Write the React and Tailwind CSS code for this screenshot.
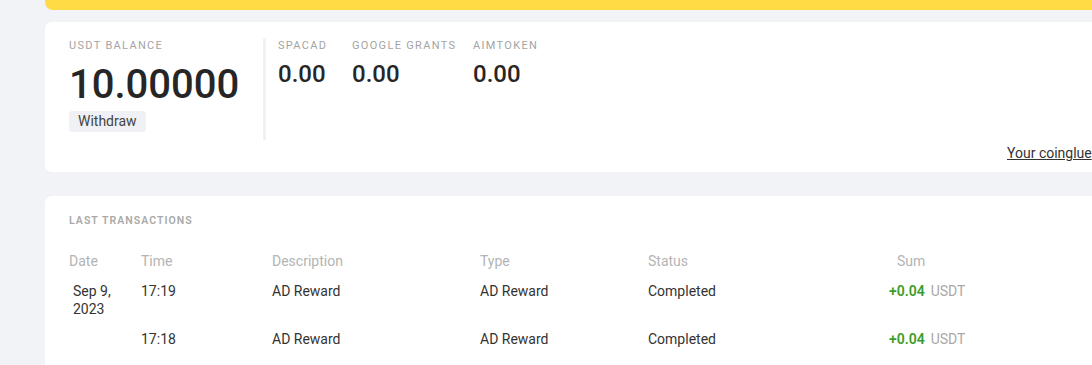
import React from 'react'

const tokens = [
  { name: 'SPACAD', value: '0.00', width: 'w-[74px]' },
  { name: 'GOOGLE GRANTS', value: '0.00', width: 'w-[121px]' },
  { name: 'AIMTOKEN', value: '0.00', width: 'w-[100px]' },
]

const rows = [
  { date: ['Sep 9,', '2023'], time: '17:19', desc: 'AD Reward', type: 'AD Reward', status: 'Completed', sum: '+0.04' },
  { date: [], time: '17:18', desc: 'AD Reward', type: 'AD Reward', status: 'Completed', sum: '+0.04' },
]

export default function App() {
  return (
    <div className="w-[1092px] h-[365px] overflow-hidden bg-[#f2f3f6] font-['Roboto',sans-serif] text-[#333]">
      <div className="pl-[45px] w-[1200px] flex flex-col">
        {/* banner */}
        <div className="h-[10px] bg-[#ffdc45] rounded-b-[8px]" />

        {/* balances */}
        <div className="mt-[12px] h-[150px] bg-white rounded-[7px] flex flex-col px-[24px] pt-[17px]">
          <div className="flex">
            <div className="w-[194px]">
              <div className="text-[11px] leading-[14px] tracking-[0.12em] text-[#a4a4a4]">USDT BALANCE</div>
              <div className="mt-[8px] text-[40px] leading-[48px] font-medium text-[#262626]">10.00000</div>
              <button className="mt-[2px] h-[21px] px-[9px] bg-[#f0f1f4] rounded-[3px] text-[14px] leading-[21px] text-[#444]">
                Withdraw
              </button>
            </div>
            <div className="w-[3px] h-[102px] -mt-[1px] bg-[#f1f1f3] rounded-full" />
            <div className="flex pl-[12px]">
              {tokens.map((t) => (
                <div key={t.name} className={t.width}>
                  <div className="text-[11px] leading-[14px] tracking-[0.12em] text-[#a4a4a4] whitespace-nowrap">{t.name}</div>
                  <div className="mt-[7px] text-[24px] leading-[28px] font-medium text-[#262626]">{t.value}</div>
                </div>
              ))}
            </div>
          </div>
          <div className="pl-[938px] mt-[1px]">
            <a className="text-[14px] leading-[18px] underline text-[#333] whitespace-nowrap">Your coinglue</a>
          </div>
        </div>

        {/* transactions */}
        <div className="mt-[24px] h-[300px] bg-white rounded-[7px] px-[24px] pt-[18px]">
          <div className="text-[10.5px] leading-[14px] font-semibold tracking-[0.1em] text-[#a9a9a9]">LAST TRANSACTIONS</div>
          <table className="mt-[18px] text-[14px] leading-[18px] text-left table-fixed">
            <thead>
              <tr className="text-[#b4b4b4]">
                <th className="w-[72px] py-[6px] font-normal">Date</th>
                <th className="w-[131px] py-[6px] font-normal">Time</th>
                <th className="w-[208px] py-[6px] font-normal">Description</th>
                <th className="w-[168px] py-[6px] font-normal">Type</th>
                <th className="w-[241px] py-[6px] font-normal">Status</th>
                <th className="w-[120px] py-[6px] pl-[8px] font-normal">Sum</th>
              </tr>
            </thead>
            <tbody className="text-[#333]">
              {rows.map((r, i) => (
                <tr key={i} className="align-top">
                  <td className="py-[6px] pl-[4px]">
                    {r.date.map((d) => (
                      <div key={d}>{d}</div>
                    ))}
                  </td>
                  <td className="py-[6px]">{r.time}</td>
                  <td className="py-[6px]">{r.desc}</td>
                  <td className="py-[6px]">{r.type}</td>
                  <td className="py-[6px]">{r.status}</td>
                  <td className="py-[6px] whitespace-nowrap">
                    <span className="font-semibold text-[#3b9e2a]">{r.sum}</span>
                    <span className="ml-[6px] text-[#a9a9a9]">USDT</span>
                  </td>
                </tr>
              ))}
            </tbody>
          </table>
        </div>
      </div>
    </div>
  )
}
